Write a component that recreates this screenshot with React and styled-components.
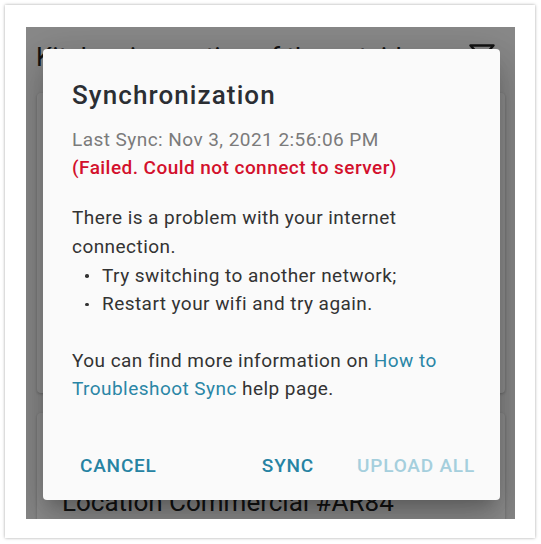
import styled, { createGlobalStyle } from "styled-components";

const GlobalStyle = createGlobalStyle`
  body {
    margin: 0;
    background: #ffffff;
    font-family: Roboto, "Noto Sans", sans-serif;
  }
`;

const Page = styled.div`
  padding: 5px;
`;

const Frame = styled.div`
  box-sizing: border-box;
  width: 530px;
  height: 533px;
  padding: 22px 20px 19px 21px;
  background: #ffffff;
  box-shadow: 0 0 3px rgba(0, 0, 0, 0.35);
`;

const Screen = styled.div`
  display: grid;
  height: 492px;
  overflow: hidden;
  background: #f4f4f4;

  & > * {
    grid-area: 1 / 1;
  }
`;

const AppView = styled.div`
  display: flex;
  flex-direction: column;
`;

const AppHeader = styled.div`
  display: flex;
  justify-content: space-between;
  align-items: flex-start;
  padding: 15px 20px 0 10px;
`;

const AppTitle = styled.div`
  font-size: 26px;
  line-height: 30px;
  color: #222;
  white-space: nowrap;
`;

const FilterIcon = styled.svg`
  margin-top: 2px;
  flex: none;
`;

const Card = styled.div`
  margin: ${(p) => p.$top}px 10px 0 11px;
  height: ${(p) => p.$height}px;
  padding: ${(p) => p.$pad}px 0 0 25px;
  box-sizing: border-box;
  background: #ffffff;
  border-radius: 4px;
  box-shadow: 0 1px 3px rgba(0, 0, 0, 0.25);
`;

const CardTitle = styled.div`
  font-size: 26px;
  line-height: 30px;
  color: #222;
  white-space: nowrap;
`;

const Backdrop = styled.div`
  background: rgba(0, 0, 0, 0.44);
`;

const Dialog = styled.div`
  align-self: start;
  box-sizing: border-box;
  height: 451px;
  margin: 22px 15px 0 17px;
  padding: 30px 25px 0 29px;
  display: flex;
  flex-direction: column;
  background: #fafafa;
  border-radius: 4px;
  box-shadow: 0 11px 15px -7px rgba(0, 0, 0, 0.2),
    0 24px 38px 3px rgba(0, 0, 0, 0.14), 0 9px 46px 8px rgba(0, 0, 0, 0.12);
`;

const Title = styled.h2`
  margin: 0;
  font-size: 26px;
  font-weight: 500;
  line-height: 32px;
  letter-spacing: 1.1px;
  color: #2b2e33;
`;

const Status = styled.div`
  margin-top: 14.5px;
  font-size: 19px;
  line-height: 28.8px;
  letter-spacing: 0.45px;
  color: #7b7b7b;
`;

const Error = styled.div`
  color: #d3102c;
  font-weight: 500;
`;

const Text = styled.div`
  margin-top: ${(p) => p.$gap}px;
  padding-right: 3px;
  font-size: 19px;
  line-height: 28.6px;
  letter-spacing: 0.45px;
  color: #333333;
`;

const List = styled.ul`
  margin: 0;
  padding: 0;
  list-style: none;
`;

const Item = styled.li`
  display: flex;
  align-items: center;
`;

const Marker = styled.span`
  flex: none;
  width: 30px;
  display: flex;
  padding-left: 13px;
  box-sizing: border-box;

  &::before {
    content: "";
    width: 3.5px;
    height: 3.5px;
    border-radius: 50%;
    background: #333;
  }
`;

const Link = styled.a`
  color: #2a86a6;
  text-decoration: none;
`;

const Actions = styled.div`
  margin-top: auto;
  padding: 0 0 20.5px 8px;
  display: flex;
  align-items: center;
`;

const Button = styled.button`
  border: none;
  background: none;
  padding: 0;
  margin-right: ${(p) => p.$after || 0}px;
  font-family: Roboto, sans-serif;
  font-size: 19px;
  font-weight: 500;
  line-height: 28px;
  letter-spacing: 0.8px;
  text-transform: uppercase;
  color: ${(p) => (p.disabled ? "#a5cfdd" : "#2683a3")};
`;

const Spacer = styled.div`
  flex: 1;
`;

export default function App() {
  return (
    <Page>
      <GlobalStyle />
      <Frame>
        <Screen>
          <AppView>
            <AppHeader>
              <AppTitle>Kitchen inspection of the outside</AppTitle>
              <FilterIcon width="26" height="24" viewBox="0 0 26 24">
                <path
                  d="M1.5 1.5h23l-9 10v9l-5 2.5v-11.5z"
                  fill="none"
                  stroke="#222"
                  strokeWidth="2.4"
                  strokeLinejoin="round"
                />
              </FilterIcon>
            </AppHeader>
            <Card $top={21} $height={300} $pad={20}>
              <CardTitle>Kitchen</CardTitle>
            </Card>
            <Card $top={20} $height={140} $pad={74}>
              <CardTitle>Location Commercial #AR84</CardTitle>
            </Card>
          </AppView>
          <Backdrop />
          <Dialog>
            <Title>Synchronization</Title>
            <Status>
              Last Sync: Nov 3, 2021 2:56:06 PM
              <Error>(Failed. Could not connect to server)</Error>
            </Status>
            <Text $gap={21.4}>
              There is a problem with your internet connection.
              <List>
                <Item>
                  <Marker />
                  Try switching to another network;
                </Item>
                <Item>
                  <Marker />
                  Restart your wifi and try again.
                </Item>
              </List>
            </Text>
            <Text $gap={27.8}>
              You can find more information on{" "}
              <Link href="#">How to Troubleshoot Sync</Link> help page.
            </Text>
            <Actions>
              <Button>Cancel</Button>
              <Spacer />
              <Button $after={43}>Sync</Button>
              <Button disabled>Upload all</Button>
            </Actions>
          </Dialog>
        </Screen>
      </Frame>
    </Page>
  );
}
